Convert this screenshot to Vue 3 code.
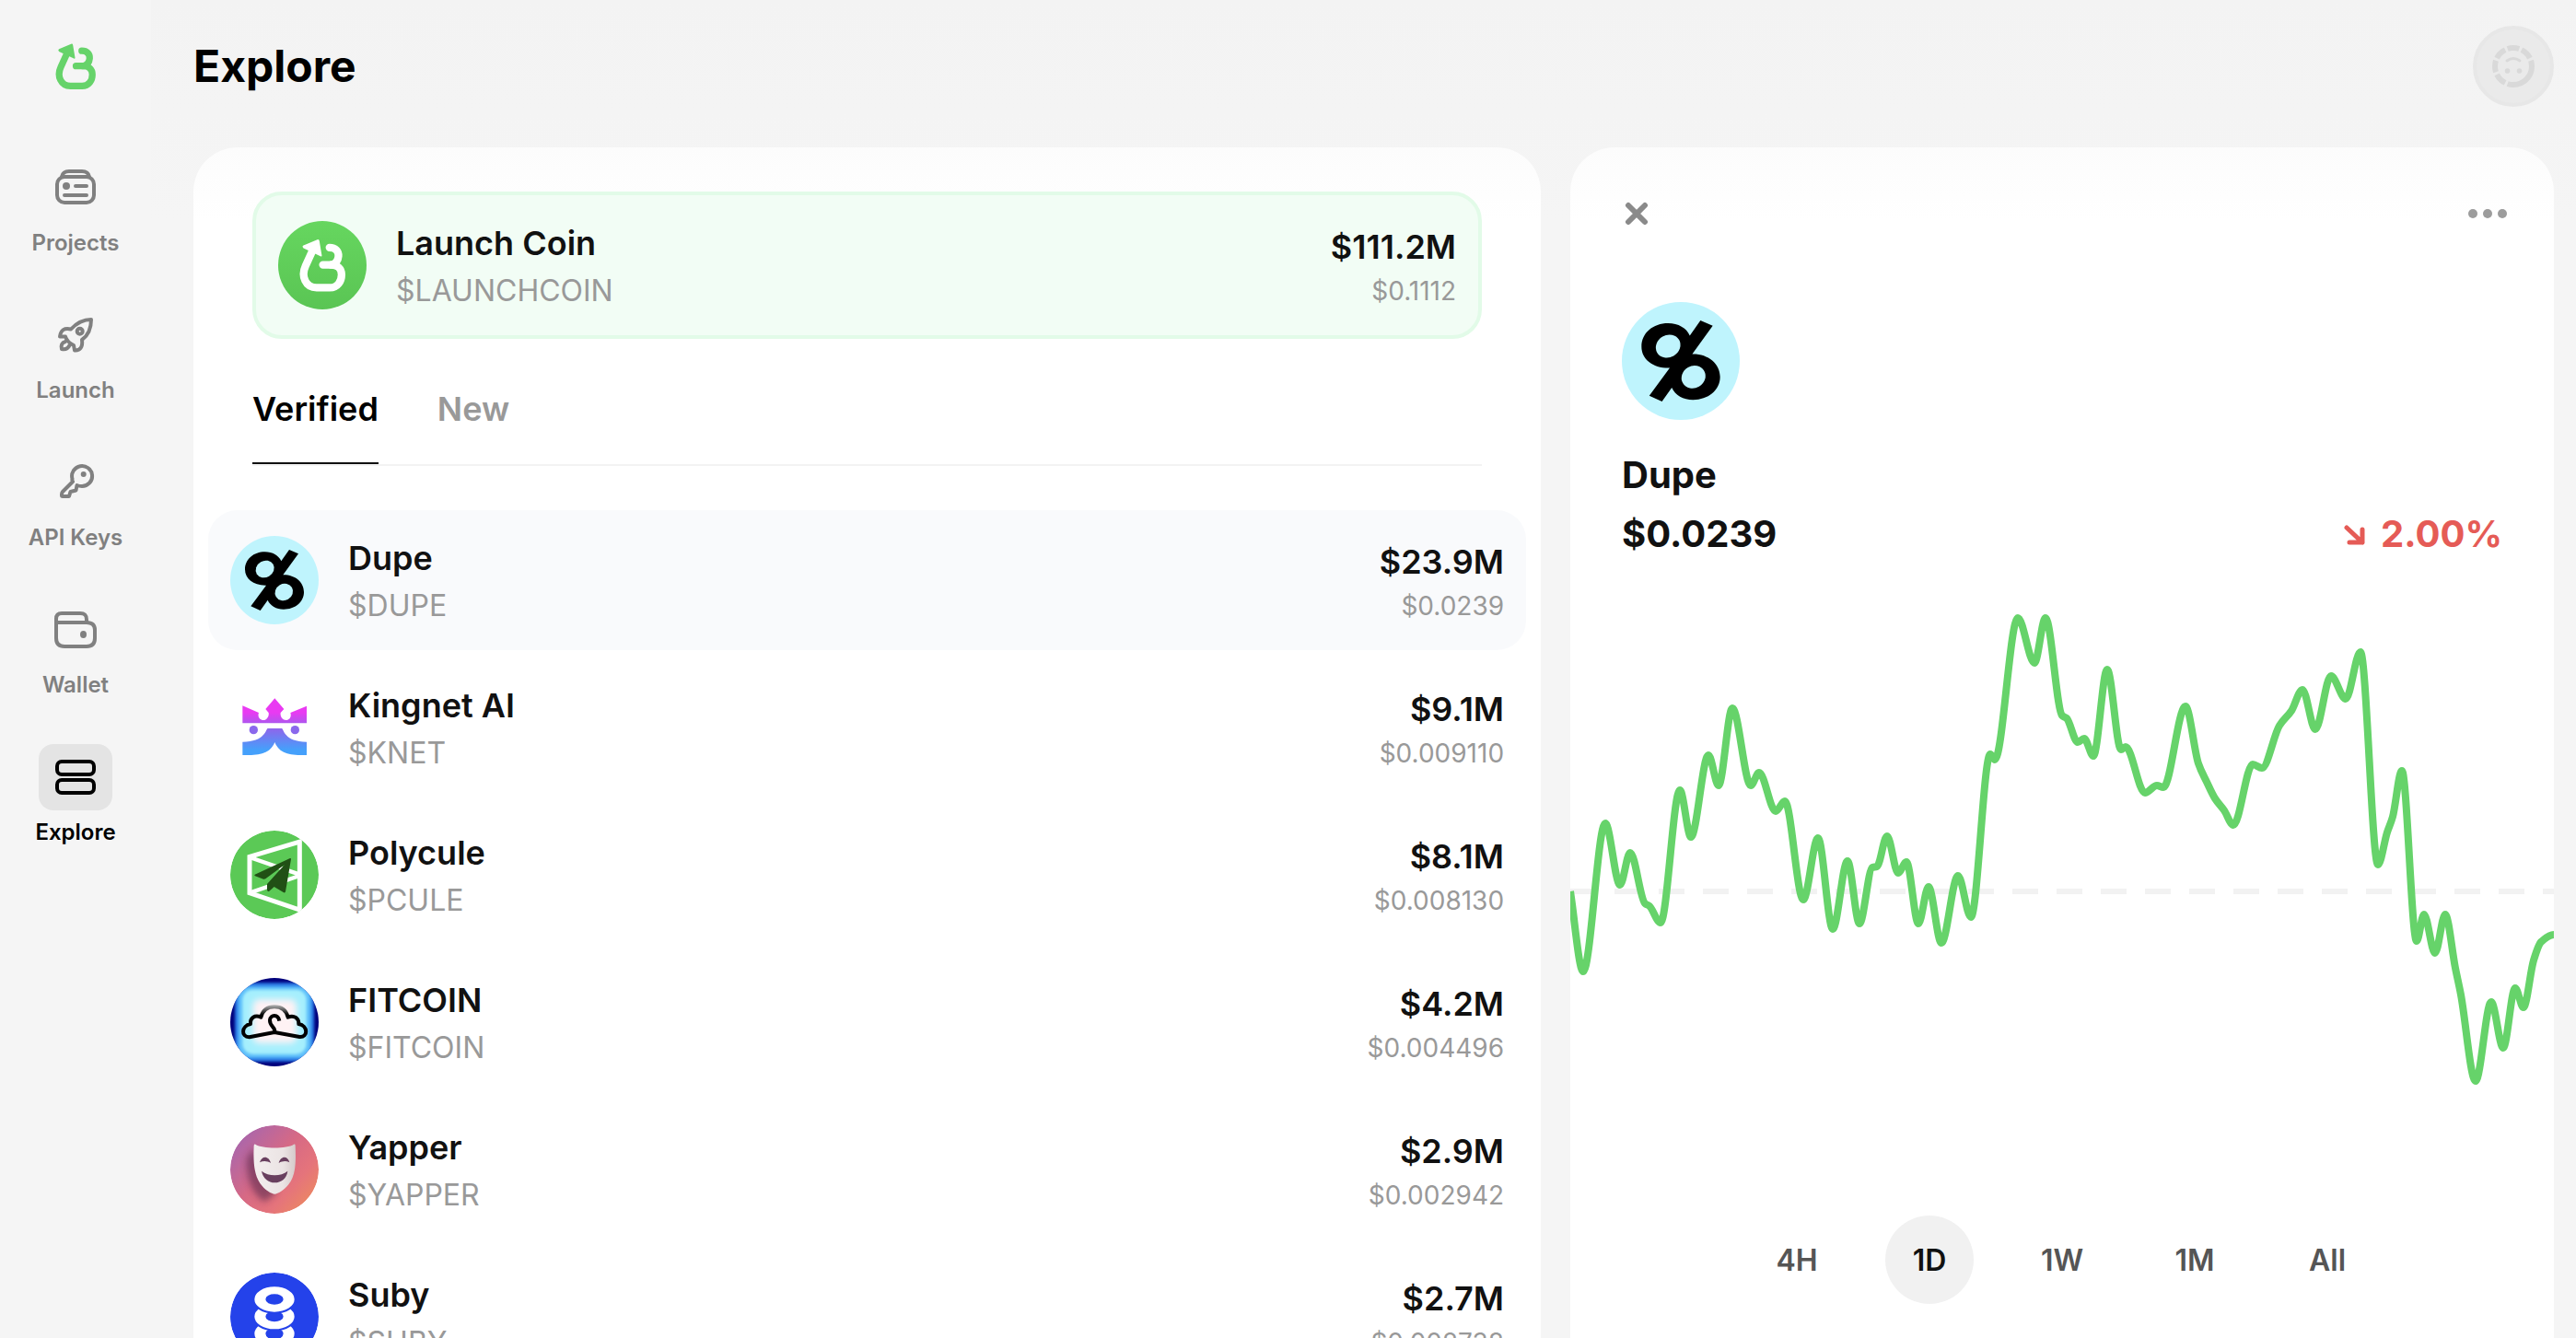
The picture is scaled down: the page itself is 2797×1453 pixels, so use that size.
<script setup>
import { ref, computed } from 'vue'

const navItems = ['Projects', 'Launch', 'API Keys', 'Wallet', 'Explore']
const activeNav = ref('Explore')

const tabs = ['Verified', 'New']
const activeTab = ref('Verified')

const tokens = [
  { id: 'dupe', name: 'Dupe', ticker: '$DUPE', cap: '$23.9M', price: '$0.0239' },
  { id: 'kingnet', name: 'Kingnet AI', ticker: '$KNET', cap: '$9.1M', price: '$0.009110' },
  { id: 'polycule', name: 'Polycule', ticker: '$PCULE', cap: '$8.1M', price: '$0.008130' },
  { id: 'fitcoin', name: 'FITCOIN', ticker: '$FITCOIN', cap: '$4.2M', price: '$0.004496' },
  { id: 'yapper', name: 'Yapper', ticker: '$YAPPER', cap: '$2.9M', price: '$0.002942' },
  { id: 'suby', name: 'Suby', ticker: '$SUBY', cap: '$2.7M', price: '$0.002738' }
]
const selectedId = ref('dupe')

const ranges = ['4H', '1D', '1W', '1M', 'All']
const activeRange = ref('1D')

const OPEN_Y = 368
const points = [
  [0, 368], [14, 455], [38, 294], [54, 361], [65, 326], [81, 381], [86, 384], [98, 402],
  [119, 258], [131, 309], [150, 220], [161, 253], [176, 169], [196, 253], [205, 239],
  [223, 281], [233, 270], [253, 377], [269, 310], [285, 409], [301, 335], [314, 403],
  [328, 342], [333, 341], [344, 308], [356, 348], [365, 336], [378, 403], [389, 363],
  [403, 424], [421, 351], [435, 396], [456, 219], [461, 225], [486, 71], [504, 120],
  [516, 71], [534, 177], [539, 180], [551, 206], [558, 202], [568, 221], [583, 127],
  [598, 214], [603, 211], [624, 261], [637, 253], [644, 255], [668, 167], [682, 229],
  [691, 249], [700, 267], [710, 280], [720, 296], [741, 230], [751, 234], [770, 188],
  [783, 172], [795, 149], [809, 192], [826, 134], [842, 159], [858, 108], [877, 339],
  [887, 304], [893, 287], [903, 237], [919, 422], [927, 393], [939, 435], [950, 393],
  [961, 451], [967, 480], [983, 574], [1000, 488], [1013, 538], [1026, 473], [1035, 494],
  [1046, 443], [1054, 423], [1068, 415]
]

// Monotone cubic interpolation, so the line never overshoots a data point.
const linePath = computed(() => {
  const n = points.length
  const slope = points.slice(1).map((p, i) => (p[1] - points[i][1]) / (p[0] - points[i][0]))
  const tangent = points.map((p, i) => {
    if (i === 0) return slope[0]
    if (i === n - 1) return 0
    const a = slope[i - 1], b = slope[i]
    return a * b <= 0 ? 0 : (2 * a * b) / (a + b)
  })
  let d = `M${points[0][0]} ${points[0][1]}`
  for (let i = 1; i < n; i++) {
    const [x0, y0] = points[i - 1]
    const [x1, y1] = points[i]
    const h = (x1 - x0) / 3
    d += ` C${x0 + h} ${y0 + h * tangent[i - 1]} ${x1 - h} ${y1 - h * tangent[i]} ${x1} ${y1}`
  }
  return d
})
</script>

<template>
  <!-- Shared logo shapes -->
  <svg class="sprite" aria-hidden="true">
    <defs>
      <linearGradient id="g-king" gradientUnits="userSpaceOnUse" x1="0" y1="655" x2="0" y2="841">
        <stop offset="0.25" stop-color="#e93af2" />
        <stop offset="0.55" stop-color="#8a68ec" />
        <stop offset="0.9" stop-color="#45a0fb" />
      </linearGradient>
      <linearGradient id="g-cloud" gradientUnits="userSpaceOnUse" x1="0" y1="214" x2="0" y2="246">
        <stop offset="0" stop-color="#b5b5b5" />
        <stop offset="1" stop-color="#000" />
      </linearGradient>
      <linearGradient id="g-yap" x1="0.05" y1="0.15" x2="0.9" y2="0.9">
        <stop offset="0" stop-color="#a766ae" />
        <stop offset="0.45" stop-color="#d66985" />
        <stop offset="0.75" stop-color="#e5747b" />
        <stop offset="1" stop-color="#ec8862" />
      </linearGradient>
      <linearGradient id="g-mask" x1="0" y1="0" x2="1" y2="0">
        <stop offset="0" stop-color="#f3eeee" />
        <stop offset="0.7" stop-color="#ebe4e4" />
        <stop offset="1" stop-color="#d5caca" />
      </linearGradient>
      <filter id="blur-s" x="-20%" y="-20%" width="140%" height="140%"><feGaussianBlur stdDeviation="5" /></filter>
      <filter id="blur-l" x="-30%" y="-30%" width="160%" height="160%"><feGaussianBlur stdDeviation="11" /></filter>
      <clipPath id="disc-a"><circle cx="294" cy="270" r="144" /></clipPath>
      <clipPath id="disc-b"><circle cx="294" cy="1230" r="144" /></clipPath>
      <clipPath id="disc-c"><circle cx="294" cy="750" r="144" /></clipPath>
    </defs>

    <symbol id="logo-mark" viewBox="180 140 133 152">
      <g fill="none" stroke="currentColor" stroke-width="22" stroke-linecap="round" stroke-linejoin="round">
        <path d="M218 174L198 218C184 248 198 281 230 281H268C291 281 302 262 302 243C302 226 290 215 272 215H248" />
        <path d="M267 165C285 165 294 176 293 190C292 202 285 212 272 215" />
      </g>
      <path d="M192 159L232 142Q237 140 238 146L245 188Q245 192 241 190L192 167Q187 162 192 159Z" fill="currentColor" />
    </symbol>

    <symbol id="token-dupe" viewBox="150 126 288 288">
      <circle cx="294" cy="270" r="144" fill="#bff4fd" />
      <path d="M342 171L372 184L322 253C360 252 390 276 390 309C390 342 360 365 324 365C300 365 280 353 272 335L248 369L217 355L267 287C226 288 198 266 198 235C198 202 226 178 263 178C288 178 308 190 316 208Z" />
      <ellipse cx="263" cy="234" rx="31" ry="27" transform="rotate(-30 263 234)" fill="#bff4fd" />
      <ellipse cx="325" cy="309" rx="30" ry="27" transform="rotate(-30 325 309)" fill="#bff4fd" />
    </symbol>

    <symbol id="token-kingnet" viewBox="150 606 288 288">
      <g fill="url(#g-king)">
        <path d="M190 679L243 702C238 714 246 726 258 726S277 712 275 702L265 690L295 655L325 690L314 702C312 714 320 726 332 726S350 714 346 702L399 680V736H190Z" />
        <path d="M272 753H318C324 755 326 797 399 797V840C350 841 311 838 295 798C279 838 240 841 190 840V797C264 797 266 755 272 753Z" />
      </g>
      <circle cx="226" cy="758" r="14" fill="#8a68ec" />
      <circle cx="361" cy="758" r="14" fill="#8a68ec" />
    </symbol>

    <symbol id="token-polycule" viewBox="150 1086 288 288">
      <g clip-path="url(#disc-b)">
        <circle cx="294" cy="1230" r="144" fill="#5bc956" />
        <g fill="none" stroke="#fff" stroke-width="15">
          <path d="M213 1171L376 1122V1344L213 1289Z" />
          <path d="M213 1173L376 1229M213 1289L376 1233" stroke-width="13" />
        </g>
        <path
          d="M230 1229L345 1176Q348 1175 348 1179L330 1285Q328 1290 323 1287L293 1269L277 1283Q271 1286 270 1279L270 1260L327 1197L265 1243Q262 1245 258 1244L231 1234Q227 1232 230 1229Z"
          fill="#215015"
        />
      </g>
    </symbol>

    <symbol id="token-fitcoin" viewBox="150 126 288 288">
      <g clip-path="url(#disc-a)">
        <rect x="150" y="126" width="288" height="288" fill="#00007c" />
        <rect x="165" y="142" width="258" height="256" rx="30" fill="#2a7be6" filter="url(#blur-s)" />
        <rect x="176" y="154" width="236" height="232" rx="34" fill="#5fc0fa" filter="url(#blur-s)" />
        <rect x="190" y="164" width="208" height="210" rx="34" fill="#a5effd" filter="url(#blur-s)" />
        <rect x="224" y="196" width="142" height="142" rx="20" fill="#fff2f4" filter="url(#blur-l)" />
        <path d="M212 319C184 318 186 282 216 276C214 256 230 245 250 254C256 230 270 220 294 220C318 220 332 230 338 254C358 245 374 258 373 276C404 282 404 320 376 318L294 303Z" fill="none" stroke="url(#g-cloud)" stroke-width="12" stroke-linejoin="round" />
        <path d="M294 303C300 286 278 286 279 263C281 245 306 243 310 266" fill="none" stroke="#000" stroke-width="12" />
      </g>
    </symbol>

    <symbol id="token-yapper" viewBox="150 606 288 288">
      <g clip-path="url(#disc-c)">
        <circle cx="294" cy="750" r="144" fill="url(#g-yap)" />
        <path d="M226 680L204 715C200 775 220 830 262 856L300 826Z" fill="#5d2b50" opacity="0.6" filter="url(#blur-l)" />
        <path d="M232 668C255 683 335 683 357 668Q362 667 362 672C364 720 365 768 340 799C325 817 305 830 295 830C285 830 262 817 247 795C226 764 225 720 227 672Q228 667 232 668Z" fill="url(#g-mask)" />
        <g fill="#69405f">
          <path d="M246 727C252 704 276 704 282 729C270 722 258 721 246 727Z" />
          <path d="M308 729C314 704 338 704 343 727C332 721 320 722 308 729Z" />
          <path d="M252 755C275 773 315 773 337 755C334 780 315 793 295 793C275 793 256 778 252 755Z" />
        </g>
      </g>
    </symbol>

    <symbol id="token-suby" viewBox="150 1086 288 288">
      <g clip-path="url(#disc-b)">
        <circle cx="294" cy="1230" r="144" fill="#2442ea" />
        <g fill="#fff" stroke="#2442ea" stroke-width="6">
          <ellipse cx="294" cy="1285" rx="68" ry="44" />
          <ellipse cx="294" cy="1285" rx="26" ry="16" fill="#2442ea" />
          <ellipse cx="294" cy="1229" rx="68" ry="44" />
          <ellipse cx="294" cy="1229" rx="26" ry="14" fill="#2442ea" />
          <ellipse cx="294" cy="1173" rx="68" ry="44" />
          <ellipse cx="294" cy="1173" rx="26" ry="14" fill="#2442ea" />
        </g>
      </g>
    </symbol>
  </svg>

  <div class="app">
    <aside class="sidebar">
      <a class="brand" href="#" aria-label="Home">
        <svg width="44" height="50"><use href="#logo-mark" /></svg>
      </a>
      <nav class="nav">
        <a
          v-for="item in navItems"
          :key="item"
          href="#"
          class="nav-item"
          :class="{ active: activeNav === item }"
          @click.prevent="activeNav = item"
        >
          <span class="nav-icon">
            <svg viewBox="0 0 48 48" width="48" height="48" fill="none" stroke="currentColor" stroke-width="4" stroke-linecap="round" stroke-linejoin="round">
              <template v-if="item === 'Projects'">
                <rect x="4" y="12" width="40" height="28" rx="8" />
                <path d="M9 12C10 7 13 6 17 6H31C35 6 38 7 39 12" />
                <circle cx="14" cy="22" r="4" fill="currentColor" stroke="none" />
                <path d="M24 22H36M12 32H36" />
              </template>
              <template v-else-if="item === 'Launch'">
                <path d="M41 7C32 7 25 11 19 17.500C12 16 8 18 7 25.500L13 25.500C14 29 18 33 22 35L23 40.500C29 41 32 37 31 29C38 24 41 17 41 7Z" />
                <circle cx="28.700" cy="19.700" r="3" />
                <path d="M13 31C9 32 8 35 9 39C13 40 16 38 17.500 35" />
              </template>
              <template v-else-if="item === 'API Keys'">
                <path d="M21 23L10 34Q9 35 9 37V38Q9 39 10 39H17L18.500 34L24.500 32.500L25.500 27Q28 28 31 28A11 11 0 1 0 20.500 20Q20 22 21 23Z" />
                <circle cx="32.700" cy="15" r="3" fill="currentColor" stroke="none" />
              </template>
              <template v-else-if="item === 'Wallet'">
                <path d="M3 16V12C3 8 5 6 9 6H29C34 6 36 8 36 13V16M3 16H36C42 16 45 19 45 24V33C45 39 42 42 36 42H12C6 42 3 39 3 33Z" />
                <ellipse cx="32.500" cy="29" rx="3.500" ry="4" fill="currentColor" stroke="none" />
              </template>
              <template v-else>
                <rect x="4" y="7" width="40" height="14" rx="5" />
                <rect x="4" y="27" width="40" height="14" rx="5" />
              </template>
            </svg>
          </span>
          {{ item }}
        </a>
      </nav>
    </aside>

    <main class="main">
      <header class="header">
        <h1>Explore</h1>
        <button class="profile" type="button" aria-label="Profile">
          <svg viewBox="0 0 80 80" width="80" height="80" fill="none" stroke="currentColor">
            <circle cx="40" cy="40" r="20" stroke-width="6" pathLength="360" stroke-dasharray="108.500 8 37 8 37 8 37 8 37 8 37 8 18.500 0" />
            <path d="M33 34Q40 29 47 34" stroke-width="3" stroke-linecap="round" />
            <circle cx="33.500" cy="45" r="2.800" fill="currentColor" stroke="none" />
            <circle cx="46.500" cy="45" r="2.800" fill="currentColor" stroke="none" />
          </svg>
        </button>
      </header>

      <div class="columns">
        <section class="card list-card">
          <button class="featured" type="button">
            <span class="token-logo launch-logo">
              <svg width="50" height="58"><use href="#logo-mark" /></svg>
            </span>
            <span class="token-info">
              <span class="name">Launch Coin</span>
              <span class="ticker">$LAUNCHCOIN</span>
            </span>
            <span class="token-value">
              <span class="cap">$111.2M</span>
              <span class="price">$0.1112</span>
            </span>
          </button>

          <div class="tabs" role="tablist">
            <button
              v-for="tab in tabs"
              :key="tab"
              type="button"
              role="tab"
              class="tab"
              :class="{ active: activeTab === tab }"
              :aria-selected="activeTab === tab"
              @click="activeTab = tab"
            >{{ tab }}</button>
          </div>

          <ul class="tokens">
            <li v-for="t in tokens" :key="t.id">
              <button
                type="button"
                class="token-row"
                :class="{ selected: selectedId === t.id }"
                @click="selectedId = t.id"
              >
                <svg class="token-logo"><use :href="'#token-' + t.id" /></svg>
                <span class="token-info">
                  <span class="name">{{ t.name }}</span>
                  <span class="ticker">{{ t.ticker }}</span>
                </span>
                <span class="token-value">
                  <span class="cap">{{ t.cap }}</span>
                  <span class="price">{{ t.price }}</span>
                </span>
              </button>
            </li>
          </ul>
        </section>

        <section class="card detail-card">
          <div class="detail-bar">
            <button type="button" aria-label="Close">
              <svg viewBox="0 0 32 32" width="32" height="32" stroke="#8a8a8a" stroke-width="6" stroke-linecap="round">
                <path d="M7 7L25 25M25 7L7 25" />
              </svg>
            </button>
            <button type="button" aria-label="More">
              <svg viewBox="0 0 48 32" width="48" height="32" fill="#9c9c9c">
                <circle cx="8" cy="16" r="5" />
                <circle cx="24" cy="16" r="5" />
                <circle cx="40" cy="16" r="5" />
              </svg>
            </button>
          </div>

          <div class="summary">
            <svg class="detail-logo"><use href="#token-dupe" /></svg>
            <h2>Dupe</h2>
            <div class="quote">
              <span>$0.0239</span>
              <span class="change">
                <svg viewBox="0 0 24 24" width="24" height="24" fill="none" stroke="currentColor" stroke-width="5" stroke-linecap="round" stroke-linejoin="round">
                  <path d="M3 5L20 21M20 7V21H6" />
                </svg>
                2.00%
              </span>
            </div>
          </div>

          <svg class="chart" viewBox="0 40 1068 560" preserveAspectRatio="none" role="img" aria-label="Dupe price, 1D">
            <line x1="0" :y1="OPEN_Y" x2="1068" :y2="OPEN_Y" class="open-line" />
            <path :d="linePath" class="price-line" />
          </svg>

          <div class="ranges">
            <button
              v-for="r in ranges"
              :key="r"
              type="button"
              class="range"
              :class="{ active: activeRange === r }"
              @click="activeRange = r"
            >{{ r }}</button>
          </div>
        </section>
      </div>
    </main>
  </div>
</template>

<style>
body {
  margin: 0;
  background: #f5f5f5;
}
</style>

<style scoped>
.sprite {
  position: absolute;
  width: 0;
  height: 0;
}
.app {
  display: flex;
  height: 100vh;
  overflow: hidden;
  background: #f5f5f5;
  color: #111;
  font-family: Inter, "Liberation Sans", sans-serif;
}
button {
  margin: 0;
  padding: 0;
  border: 0;
  background: none;
  color: inherit;
  font: inherit;
  text-align: left;
  cursor: pointer;
}
svg {
  display: block;
  flex: none;
}

/* Sidebar */
.sidebar {
  flex: none;
  width: 164px;
}
.brand {
  display: flex;
  align-items: center;
  justify-content: center;
  height: 144px;
  color: #66d36a;
}
.nav {
  display: flex;
  flex-direction: column;
  gap: 48px;
  padding-top: 24px;
}
.nav-item {
  display: flex;
  flex-direction: column;
  align-items: center;
  gap: 8px;
  color: #808080;
  font-size: 24px;
  font-weight: 600;
  line-height: 32px;
  text-decoration: none;
}
.nav-icon {
  display: flex;
  align-items: center;
  justify-content: center;
  width: 80px;
  height: 72px;
  border-radius: 16px;
}
.nav-item.active {
  color: #000;
}
.nav-item.active .nav-icon {
  background: #e4e4e4;
}

/* Main */
.main {
  display: flex;
  flex: 1;
  flex-direction: column;
  min-width: 0;
  padding: 0 24px 0 46px;
  background: linear-gradient(#f3f3f3, #f5f5f5 240px);
}
.header {
  display: flex;
  flex: none;
  align-items: center;
  justify-content: space-between;
  height: 144px;
  margin-bottom: 16px;
}
h1 {
  margin: 0;
  color: #000;
  font-size: 48px;
  font-weight: 700;
  line-height: 56px;
}
.profile {
  border: 4px solid #e7e7e7;
  border-radius: 50%;
  background: #eaeaea;
  color: #d9d9d9;
}
.columns {
  display: grid;
  flex: 1;
  grid-template-columns: minmax(0, 1.37fr) minmax(0, 1fr);
  gap: 32px;
  min-height: 0;
}
.card {
  overflow: hidden auto;
  border-radius: 48px 48px 0 0;
  background: linear-gradient(#fcfcfc, #fff 80px);
  scrollbar-width: none;
}

/* Token list */
.list-card {
  padding: 48px 16px 0;
}
.featured,
.token-row {
  display: flex;
  align-items: center;
  gap: 32px;
  box-sizing: border-box;
  padding: 24px;
  border-radius: 32px;
}
.featured {
  width: calc(100% - 96px);
  margin: 0 48px;
  border: 4px solid #e2fbe8;
  background: #f2fdf5;
}
.token-row {
  width: 100%;
}
.token-row.selected {
  background: #f9fafc;
}
.token-logo {
  flex: none;
  width: 96px;
  height: 96px;
}
.launch-logo {
  display: flex;
  align-items: center;
  justify-content: center;
  border-radius: 50%;
  background: linear-gradient(#66d65f, #5ac554);
  color: #fff;
}
.token-info,
.token-value {
  display: flex;
  flex-direction: column;
}
.token-info {
  flex: 1;
  min-width: 0;
}
.token-value {
  text-align: right;
}
.name,
.cap {
  font-size: 36px;
  font-weight: 600;
  line-height: 56px;
}
.ticker {
  color: #999;
  font-size: 32px;
  line-height: 48px;
}
.price {
  color: #999;
  font-size: 28px;
  line-height: 40px;
}
.tabs {
  display: flex;
  gap: 64px;
  margin: 48px;
  border-bottom: 2px solid #f3f3f3;
}
.tab {
  padding-bottom: 30px;
  border-bottom: 2px solid transparent;
  color: #999;
  font-size: 36px;
  font-weight: 600;
  line-height: 56px;
}
.tab.active {
  border-color: #111;
  color: #000;
}
.tokens {
  display: flex;
  flex-direction: column;
  gap: 8px;
  margin: 0;
  padding: 0 0 16px;
  list-style: none;
}

/* Token detail */
.detail-bar {
  display: flex;
  justify-content: space-between;
  padding: 56px 48px 80px 56px;
}
.summary {
  padding: 0 56px;
}
.detail-logo {
  width: 128px;
  height: 128px;
  margin-bottom: 28px;
}
h2,
.quote {
  margin: 0;
  font-size: 40px;
  font-weight: 700;
  line-height: 64px;
}
.quote {
  display: flex;
  justify-content: space-between;
}
.change {
  display: flex;
  align-items: center;
  gap: 16px;
  color: #e55b56;
}
.chart {
  width: 100%;
  height: 560px;
  margin-top: 28px;
}
.open-line {
  stroke: #f2f2f2;
  stroke-width: 6;
  stroke-dasharray: 28 20;
}
.price-line {
  fill: none;
  stroke: #66d36a;
  stroke-width: 8;
  stroke-linejoin: round;
  vector-effect: non-scaling-stroke;
}
.ranges {
  display: flex;
  justify-content: center;
  gap: 48px;
  padding: 120px 0 48px;
}
.range {
  width: 96px;
  height: 96px;
  border-radius: 50%;
  color: #555;
  font-size: 32px;
  font-weight: 600;
  text-align: center;
}
.range.active {
  background: #f1f1f1;
  color: #111;
}
</style>
